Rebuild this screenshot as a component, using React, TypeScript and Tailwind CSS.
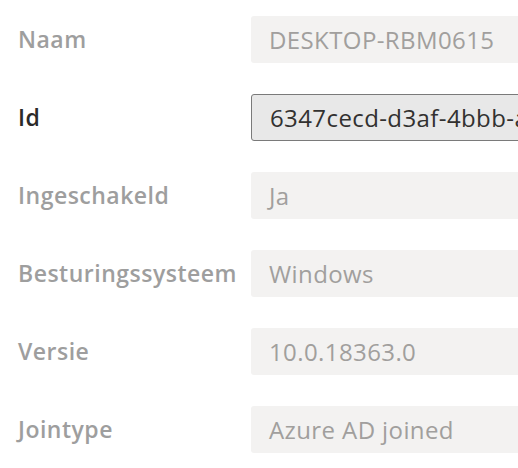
import React from "react";

const rows: { label: string; value: string; active?: boolean }[] = [
  { label: "Naam", value: "DESKTOP-RBM0615" },
  { label: "Id", value: "6347cecd-d3af-4bbb-a8f2-1c2e9d7b0f11", active: true },
  { label: "Ingeschakeld", value: "Ja" },
  { label: "Besturingssysteem", value: "Windows" },
  { label: "Versie", value: "10.0.18363.0" },
  { label: "Jointype", value: "Azure AD joined" },
];

export default function App() {
  return (
    <div
      className="w-[518px] h-[468px] overflow-hidden bg-white pl-[18px] pt-[16px] flex flex-col gap-[31px]"
      style={{ fontFamily: '"Open Sans", "Noto Sans", sans-serif' }}
    >
      {rows.map((r) => (
        <div key={r.label} className="flex items-center h-[47px] shrink-0">
          <div
            className={`w-[233px] shrink-0 text-[23px] font-semibold tracking-[0.5px] ${
              r.active ? "text-[#2b2a29]" : "text-[#9e9e9e]"
            }`}
          >
            {r.label}
          </div>
          <div
            className={`w-[320px] shrink-0 h-[47px] rounded-[3px] flex items-center pl-[18px] text-[24px] tracking-[0.4px] whitespace-nowrap overflow-hidden ${
              r.active
                ? "bg-[#e8e8e8] border border-[#7a7a7a] text-[#323130]"
                : "bg-[#f3f2f1] text-[#a19f9d]"
            }`}
          >
            {r.value}
          </div>
        </div>
      ))}
    </div>
  );
}
